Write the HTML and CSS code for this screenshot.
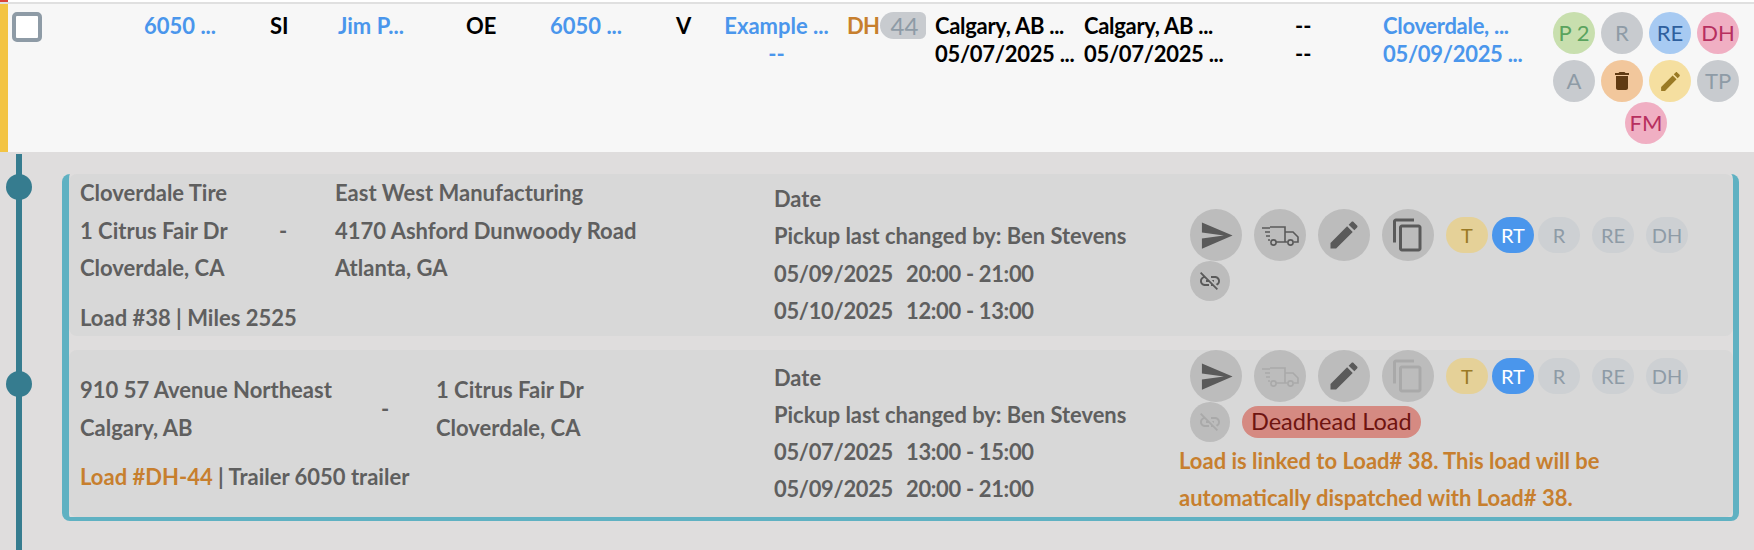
FILE: index.html
```html
<!DOCTYPE html>
<html lang="en">
<head>
<meta charset="utf-8">
<title>Load row</title>
<link rel="stylesheet" href="styles.css">
</head>
<body>
<div class="topline"><span class="tick"></span></div>
<div class="row">
  <div class="cell"><span class="check"></span></div>
  <div class="cell link">6050 ...</div>
  <div class="cell">SI</div>
  <div class="cell link">Jim P...</div>
  <div class="cell">OE</div>
  <div class="cell link">6050 ...</div>
  <div class="cell">V</div>
  <div class="cell link centered">Example ...<br>--</div>
  <div class="cell dhcell"><span class="dh">DH</span><span class="count">44</span></div>
  <div class="cell tight">Calgary, AB ...<br>05/07/2025 ...</div>
  <div class="cell tight">Calgary, AB ...<br>05/07/2025 ...</div>
  <div class="cell nudge">--<br>--</div>
  <div class="cell link tight">Cloverdale, ...<br>05/09/2025 ...</div>
  <div class="badges">
    <div class="badge-row">
      <span class="badge green">P 2</span><span class="badge grey">R</span><span class="badge blue">RE</span><span class="badge pink">DH</span>
    </div>
    <div class="badge-row">
      <span class="badge grey">A</span>
      <span class="badge orange"><svg width="24" height="24" viewBox="0 0 24 24"><path d="M6 19c0 1.100.9 2 2 2h8c1.100 0 2-.9 2-2V7H6v12zM19 4h-3.500l-1-1h-5l-1 1H5v2h14V4z"/></svg></span>
      <span class="badge yellow"><svg width="25" height="25" viewBox="0 0 24 24"><path d="M3 17.250V21h3.750L17.810 9.940l-3.750-3.750L3 17.250zM20.710 7.040c.39-.39.39-1.020 0-1.410l-2.340-2.340c-.39-.39-1.020-.39-1.410 0l-1.830 1.830 3.750 3.750 1.830-1.830z"/></svg></span>
      <span class="badge grey">TP</span>
    </div>
    <div class="badge-row last"><span class="badge pink">FM</span></div>
  </div>
</div>
<div class="detail">
  <div class="timeline"><span class="dot"></span><span class="dot second"></span></div>
  <div class="card">
    <div class="panel first">
      <div class="addr">
        <div class="stops">
          <div class="stop a1">Cloverdale Tire<br>1 Citrus Fair Dr<br>Cloverdale, CA</div>
          <div class="dash">-</div>
          <div>East West Manufacturing<br>4170 Ashford Dunwoody Road<br>Atlanta, GA</div>
        </div>
        <div class="meta">Load #38 | Miles 2525</div>
      </div>
      <div class="dates">Date<br>Pickup last changed by: Ben Stevens<br><span class="d">05/09/2025</span><span class="t">20:00 - 21:00</span><br><span class="d">05/10/2025</span><span class="t">12:00 - 13:00</span></div>
      <div class="actions">
        <div class="action-row">
          <span class="act"><svg width="35" height="35" viewBox="0 0 24 24"><path d="M2.010 21L23 12 2.010 3 2 10l15 2-15 2z"/></svg></span>
          <span class="act"><svg class="truck-icon" width="38" height="24" viewBox="0 0 38 24"><g class="truck"><path d="M9 3h15v15H15M24 8h8l5 5v5h-4.500M24 18h2.500"/><path d="M1 4h8M4 8h5M5 12h4M7 16h2"/><circle cx="12.500" cy="18.500" r="2.600"/><circle cx="29.500" cy="18.500" r="2.600"/></g></svg></span>
          <span class="act"><svg width="36" height="36" viewBox="0 0 24 24"><path d="M3 17.250V21h3.750L17.810 9.940l-3.750-3.750L3 17.250zM20.710 7.040c.39-.39.39-1.020 0-1.410l-2.340-2.340c-.39-.39-1.020-.39-1.410 0l-1.830 1.830 3.750 3.750 1.830-1.830z"/></svg></span>
          <span class="act"><svg width="36" height="36" viewBox="0 0 24 24"><path d="M16 1H4c-1.100 0-2 .9-2 2v14h2V3h12V1zm3 4H8c-1.100 0-2 .9-2 2v14c0 1.100.9 2 2 2h11c1.100 0 2-.9 2-2V7c0-1.100-.9-2-2-2zm0 16H8V7h11v14z"/></svg></span>
          <span class="pill tan">T</span><span class="pill on">RT</span><span class="pill off wide">R</span><span class="pill off wide">RE</span><span class="pill off wide">DH</span>
        </div>
        <div class="action-row two">
          <span class="act small"><svg width="24" height="24" viewBox="0 0 24 24"><path d="M17 7h-4v1.900h4c1.710 0 3.100 1.390 3.100 3.100 0 1.430-.97 2.630-2.290 2.980l1.460 1.460C20.880 15.610 22 13.950 22 12c0-2.760-2.240-5-5-5zm-1 4h-2.190l2 2H16zM2 4.270l3.110 3.110C3.290 8.120 2 9.910 2 12c0 2.760 2.240 5 5 5h4v-1.900H7c-1.710 0-3.100-1.390-3.100-3.100 0-1.590 1.210-2.900 2.760-3.070L8.730 11H8v2h2.730L13 15.270V17h1.730l4.010 4L20 19.740 3.270 3 2 4.270z"/></svg></span>
        </div>
      </div>
    </div>
    <div class="panel second">
      <div class="addr">
        <div class="stops">
          <div class="stop a2">910 57 Avenue Northeast<br>Calgary, AB</div>
          <div class="dash">-</div>
          <div>1 Citrus Fair Dr<br>Cloverdale, CA</div>
        </div>
        <div class="meta"><span class="amber">Load #DH-44</span> | Trailer 6050 trailer</div>
      </div>
      <div class="dates">Date<br>Pickup last changed by: Ben Stevens<br><span class="d">05/07/2025</span><span class="t">13:00 - 15:00</span><br><span class="d">05/09/2025</span><span class="t">20:00 - 21:00</span></div>
      <div class="actions">
        <div class="action-row">
          <span class="act"><svg width="35" height="35" viewBox="0 0 24 24"><path d="M2.010 21L23 12 2.010 3 2 10l15 2-15 2z"/></svg></span>
          <span class="act faded"><svg class="truck-icon" width="38" height="24" viewBox="0 0 38 24"><g class="truck"><path d="M9 3h15v15H15M24 8h8l5 5v5h-4.500M24 18h2.500"/><path d="M1 4h8M4 8h5M5 12h4M7 16h2"/><circle cx="12.500" cy="18.500" r="2.600"/><circle cx="29.500" cy="18.500" r="2.600"/></g></svg></span>
          <span class="act"><svg width="36" height="36" viewBox="0 0 24 24"><path d="M3 17.250V21h3.750L17.810 9.940l-3.750-3.750L3 17.250zM20.710 7.040c.39-.39.39-1.020 0-1.410l-2.340-2.340c-.39-.39-1.020-.39-1.410 0l-1.830 1.830 3.750 3.750 1.830-1.830z"/></svg></span>
          <span class="act faded"><svg width="36" height="36" viewBox="0 0 24 24"><path d="M16 1H4c-1.100 0-2 .9-2 2v14h2V3h12V1zm3 4H8c-1.100 0-2 .9-2 2v14c0 1.100.9 2 2 2h11c1.100 0 2-.9 2-2V7c0-1.100-.9-2-2-2zm0 16H8V7h11v14z"/></svg></span>
          <span class="pill tan">T</span><span class="pill on">RT</span><span class="pill off wide">R</span><span class="pill off wide">RE</span><span class="pill off wide">DH</span>
        </div>
        <div class="action-row two">
          <span class="act small faded"><svg width="24" height="24" viewBox="0 0 24 24"><path d="M17 7h-4v1.900h4c1.710 0 3.100 1.390 3.100 3.100 0 1.430-.97 2.630-2.290 2.980l1.460 1.460C20.880 15.610 22 13.950 22 12c0-2.760-2.240-5-5-5zm-1 4h-2.190l2 2H16zM2 4.270l3.110 3.110C3.290 8.120 2 9.910 2 12c0 2.760 2.240 5 5 5h4v-1.900H7c-1.710 0-3.100-1.390-3.100-3.100 0-1.590 1.210-2.900 2.760-3.070L8.730 11H8v2h2.730L13 15.270V17h1.730l4.010 4L20 19.740 3.270 3 2 4.270z"/></svg></span>
          <span class="deadhead">Deadhead Load</span>
        </div>
        <div class="linked">Load is linked to Load# 38. This load will be<br>automatically dispatched with Load# 38.</div>
      </div>
    </div>
  </div>
</div>
</body>
</html>
```

FILE: styles.css
```css
* { box-sizing: border-box; }
html, body { margin: 0; padding: 0; }
body {
  width: 1754px;
  height: 550px;
  overflow: hidden;
  background: #dfdddd;
  font-family: Lato, "Liberation Sans", sans-serif;
  font-size: 22px;
}
.topline {
  height: 4px;
  background: #fff;
  border-bottom: 2px solid #e0e0e0;
}
.tick {
  display: block;
  width: 8px;
  height: 2px;
  background: #d9443a;
}
.row {
  display: grid;
  grid-template-columns: 132px 126px 68px 128px 84px 126px 48px 123px 88px 149px 213px 86px 170px 186px;
  height: 148px;
  padding: 8px 0 0 4px;
  border-left: 8px solid #f3c443;
  background: #f7f7f7;
}
.cell {
  font-weight: 700;
  line-height: 28px;
  color: #000;
  white-space: nowrap;
}
.link { color: #4a96ec; }
.tight { letter-spacing: -0.3px; }
.nudge { margin-left: -2px; }
.centered { text-align: center; padding-right: 18px; }
.check {
  display: block;
  width: 30px;
  height: 30px;
  border: 4px solid #8e9ba6;
  border-radius: 5px;
  background: #fff;
}
.dhcell { display: flex; align-items: flex-start; }
.dh { color: #c77f2e; width: 33px; letter-spacing: -0.8px; }
.count {
  width: 46px;
  height: 27px;
  padding-left: 3px;
  border-radius: 14px 6px 6px 14px;
  background: #c8cbcf;
  color: #8e9ba6;
  font-weight: 400;
  font-size: 24px;
  line-height: 27px;
  text-align: center;
}
.badge-row { display: flex; gap: 6px; margin-bottom: 6px; }
.badge-row.last { justify-content: center; margin: -6px 0 0; }
.badge {
  display: flex;
  align-items: center;
  justify-content: center;
  flex: none;
  width: 42px;
  height: 42px;
  border-radius: 50%;
  line-height: 1;
}
.green { background: #c8dfae; color: #5aa35e; }
.grey { background: #c8cbcf; color: #8e9ba6; }
.blue { background: #a7caf2; color: #2e5f9e; }
.pink { background: #f0afc3; color: #b72f5f; }
.orange { background: #f2c79c; fill: #603a12; }
.yellow { background: #f5dfa0; fill: #9a7a25; }
.detail {
  display: flex;
  height: 398px;
}
.timeline {
  display: flex;
  flex-direction: column;
  align-items: flex-start;
  flex: none;
  width: 62px;
  padding: 22px 0 0 6px;
  background: linear-gradient(#367c8f, #367c8f) 16px 2px / 6px 100% no-repeat;
}
.dot {
  display: block;
  width: 26px;
  height: 26px;
  border-radius: 50%;
  background: #367c8f;
}
.dot.second { margin-top: 171px; }
.card {
  display: flex;
  flex-direction: column;
  gap: 14px;
  flex: none;
  width: 1677px;
  height: 347px;
  margin-top: 22px;
  border: solid #5fb1c2;
  border-width: 0 6px 4px 7px;
  border-radius: 8px;
}
.panel {
  display: grid;
  grid-template-columns: 705px 404px 555px;
  border-radius: 8px;
  background: #d8d8d8;
  color: #5f5f5f;
  font-weight: 700;
  white-space: nowrap;
}
.panel.first { height: 162px; }
.panel.second { flex: 1; }
.addr { padding-left: 11px; line-height: 37.500px; }
.stops { display: flex; align-items: center; }
.stop.a1 { width: 199px; }
.stop.a2 { width: 301px; }
.dash { width: 56px; }
.second .dash { width: 55px; }
.meta { margin-top: 12px; }
.second .addr { padding-top: 21px; }
.amber { color: #c77f2e; }
.dates { padding-top: 6px; font-size: 21.900px; line-height: 37.300px; }
.second .dates { padding-top: 8.500px; }
.d, .t { letter-spacing: -0.3px; }
.d { margin-right: 13px; }
.actions { padding: 35px 0 0 12px; }
.second .actions { padding: 0; }
.second .action-row { margin-left: 12px; }
.action-row { display: flex; align-items: center; gap: 12px; }
.act {
  display: flex;
  align-items: center;
  justify-content: center;
  flex: none;
  width: 52px;
  height: 52px;
  border-radius: 50%;
  background: #bcbcbc;
  fill: #5a5a5a;
}
.act.small { width: 40px; height: 40px; }
.act.faded { fill: #a9a9a9; }
.truck-icon { margin-top: 2px; }
.truck { fill: none; stroke: #5a5a5a; stroke-width: 1.600; }
.faded .truck { stroke: #a9a9a9; }
.pill {
  display: flex;
  align-items: center;
  justify-content: center;
  flex: none;
  width: 42px;
  height: 36px;
  margin-right: -8px;
  border-radius: 18px;
  font-size: 20px;
  font-weight: 400;
  line-height: 1;
}
.pill.wide { margin-right: 0; }
.tan { background: #e5d198; color: #9a7a25; }
.on { background: #4a96ec; color: #fff; }
.off { background: #cdd0d3; color: #8e9ba6; }
.deadhead {
  height: 32px;
  padding: 0 9px;
  border-radius: 16px;
  background: #d58a82;
  color: #6e1410;
  font-weight: 400;
  font-size: 23.500px;
  line-height: 31px;
}
.linked {
  margin-left: 1px;
  color: #c77f2e;
  font-size: 22px;
  line-height: 37px;
}
```
